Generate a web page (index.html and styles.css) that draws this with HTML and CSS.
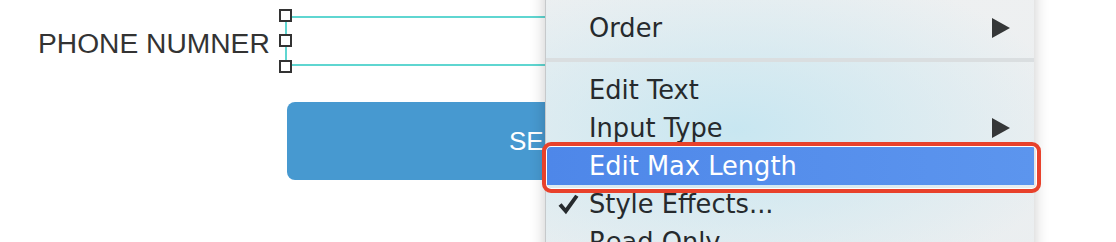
FILE: index.html
```html
<!DOCTYPE html>
<html lang="en">
<head>
<meta charset="utf-8">
<title>Form editor context menu</title>
<link rel="stylesheet" href="styles.css">
</head>
<body>
<div class="page">
  <div class="form-row">
    <span class="label">PHONE NUMNER</span>
    <div class="field">
      <span class="handle handle-top"></span>
      <span class="handle handle-mid"></span>
      <span class="handle handle-bot"></span>
    </div>
  </div>
  <button class="submit">SEND MESSAGE</button>

  <div class="menu">
    <div class="item">
      <span class="gutter"></span>
      <span class="text">Order</span>
      <svg class="arrow" width="18" height="20" viewBox="0 0 18 20"><path d="M0 0 L18 10 L0 20 Z" fill="#353738"/></svg>
    </div>
    <div class="sep"></div>
    <div class="item">
      <span class="gutter"></span>
      <span class="text">Edit Text</span>
    </div>
    <div class="item">
      <span class="gutter"></span>
      <span class="text">Input Type</span>
      <svg class="arrow" width="18" height="20" viewBox="0 0 18 20"><path d="M0 0 L18 10 L0 20 Z" fill="#353738"/></svg>
    </div>
    <div class="item item-active">
      <span class="gutter"></span>
      <span class="text">Edit Max Length</span>
      <span class="callout"></span>
    </div>
    <div class="item">
      <span class="gutter">
        <svg width="21" height="21" viewBox="0 0 20 20"><path d="M0.5 11.2 L3.4 8.8 L7.2 13.4 L16.4 0.8 L19.5 2.6 L7.6 19.2 Z" fill="#262a2d"/></svg>
      </span>
      <span class="text">Style Effects...</span>
    </div>
    <div class="item">
      <span class="gutter"></span>
      <span class="text">Read Only</span>
    </div>
  </div>
</div>
</body>
</html>
```

FILE: styles.css
```css
html, body {
  margin: 0;
  padding: 0;
  background: #ffffff;
}

.page {
  position: relative;
  width: 1116px;
  height: 242px;
  overflow: hidden;
  font-family: "Liberation Sans", Arial, sans-serif;
}

.form-row {
  display: flex;
  align-items: center;
  padding-top: 16px;
}

.label {
  flex: 0 0 285px;
  min-width: 0;
  box-sizing: border-box;
  padding-left: 38px;
  padding-top: 4px;
  font-size: 28.2px;
  color: #333333;
  white-space: nowrap;
}

.field {
  position: relative;
  width: 700px;
  height: 46px;
  border: 2px solid #5fd6d1;
  border-right: none;
}

.handle {
  position: absolute;
  left: -8px;
  width: 9px;
  height: 9px;
  border: 2px solid #333333;
  background: #ffffff;
}

.handle-top { top: -9px; }
.handle-mid { top: 16px; }
.handle-bot { bottom: -9px; }

.submit {
  display: block;
  margin: 36px 0 0 287px;
  width: 698px;
  height: 78px;
  border: none;
  border-radius: 8px;
  background: #4799d0;
  color: #ffffff;
  font-family: "Liberation Sans", Arial, sans-serif;
  font-size: 26px;
  text-align: left;
  padding: 0 0 0 222px;
}

.menu {
  position: absolute;
  left: 545px;
  top: -20px;
  width: 489px;
  box-sizing: border-box;
  padding: 29px 0 30px;
  border-left: 1px solid #c6c9cb;
  background:
    radial-gradient(ellipse 340px 170px at 190px 150px, rgba(198, 230, 241, 0.95), rgba(198, 230, 241, 0) 100%),
    linear-gradient(180deg, #eef0f1 0%, #eaeef0 100%);
  box-shadow: 0 0 14px rgba(0, 0, 0, 0.22);
  font-family: "DejaVu Sans", "Noto Sans", sans-serif;
  font-size: 25.7px;
  color: #262a2d;
}

.item {
  position: relative;
  display: flex;
  align-items: center;
  height: 38px;
  line-height: 38px;
}

.gutter {
  flex: 0 0 43px;
  display: flex;
  align-items: center;
  padding-left: 12px;
  box-sizing: border-box;
}

.gutter svg {
  display: block;
}

.text {
  white-space: nowrap;
}

.arrow {
  margin-left: auto;
  margin-right: 24px;
}

.sep {
  height: 4px;
  margin: 11px 0 9px;
  background: #dadee0;
}

.item-active {
  color: #ffffff;
  background: linear-gradient(90deg, #4e87e9 0%, #5c95ee 100%);
}

.callout {
  position: absolute;
  left: -4px;
  right: -7px;
  top: -5px;
  bottom: -8px;
  border: 4px solid #e8412b;
  border-radius: 9px;
  box-shadow: inset 0 0 0 1px #ffffff;
}
```
